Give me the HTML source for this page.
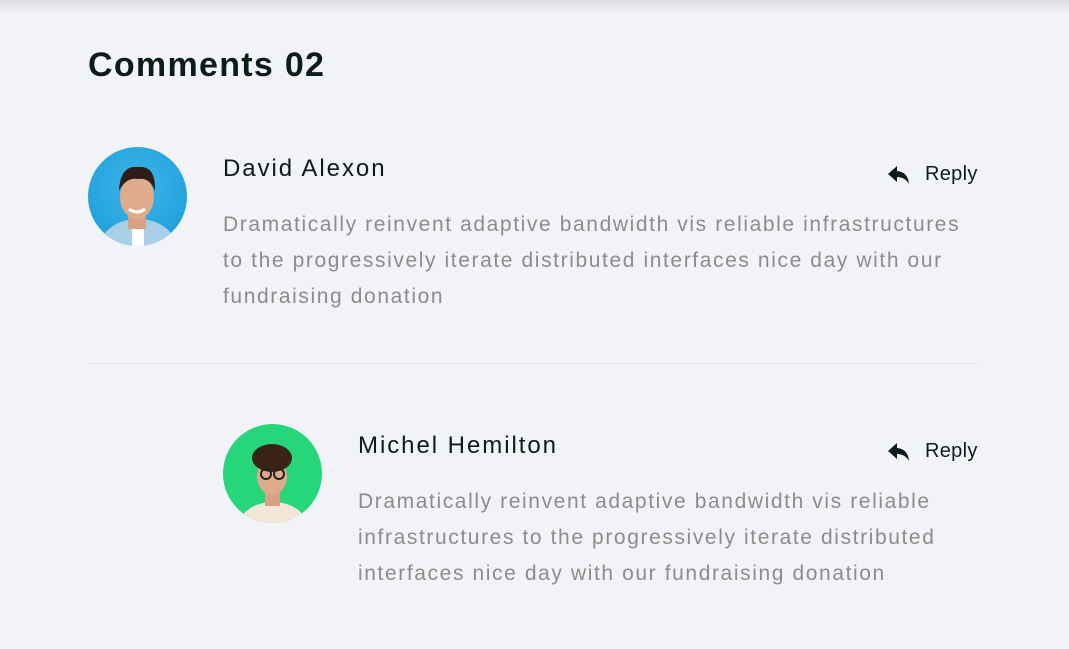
<!DOCTYPE html>
<html><head><style>
body{margin:0;width:1069px;height:649px;background:#f2f3f7;font-family:"Liberation Sans",sans-serif;position:relative;overflow:hidden}
.shadow{position:absolute;left:0;top:0;width:1069px;height:14px;background:linear-gradient(#dcdde2,#f2f3f7)}
h2{position:absolute;left:88px;top:46px;margin:0;font-size:34px;font-weight:bold;color:#0b1b1e;letter-spacing:1.3px}
.av{position:absolute;width:99px;height:99px;border-radius:50%;overflow:hidden}
.name{position:absolute;font-size:24px;color:#0b1b1e;letter-spacing:1.95px}
.txt{position:absolute;font-size:21px;line-height:36px;color:#8c8c8c;letter-spacing:1.6px;white-space:nowrap}
.reply{position:absolute;font-size:20px;color:#0b1b1e;letter-spacing:0.3px}
.reply svg{position:absolute;left:-38px;top:2px}
.hr{position:absolute;left:88px;top:363px;width:889px;height:1px;background:#e2e3e8}
</style></head><body>
<div class="shadow"></div>
<h2>Comments 02</h2>
<div class="av" style="left:88px;top:147px;background:radial-gradient(circle at 50% 40%,#3cb6ea,#1a9ad6)">
<svg width="99" height="99"><ellipse cx="50" cy="100" rx="38" ry="28" fill="#a9cfe6"/><rect x="40" y="62" width="18" height="20" fill="#d9a184"/><ellipse cx="49" cy="50" rx="17" ry="22" fill="#e0aa8c"/><path d="M31 44 Q32 18 50 20 Q68 18 67 44 Q62 30 50 32 Q38 30 31 44Z" fill="#2c1e18"/><path d="M41 62 Q49 68 57 62" stroke="#fff" stroke-width="3" fill="none"/><rect x="44" y="82" width="12" height="17" fill="#fff"/></svg></div>
<div class="name" style="left:223px;top:155px">David Alexon</div>
<div class="reply" style="left:925px;top:163px"><svg width="24" height="20" viewBox="0 0 24 20"><path d="M10 1 L1 9 L10 17 L10 12 Q18 12 22 19 Q21 7 10 6Z" fill="#0b1b1e"/></svg>Reply</div>
<div class="txt" style="left:223px;top:207px">Dramatically reinvent adaptive bandwidth vis reliable infrastructures<br>to the progressively iterate distributed interfaces nice day with our<br>fundraising donation</div>
<div class="hr"></div>
<div class="av" style="left:223px;top:424px;background:#26d67a">
<svg width="99" height="99"><ellipse cx="50" cy="102" rx="34" ry="24" fill="#f3e6d6"/><rect x="42" y="66" width="15" height="16" fill="#d9a184"/><ellipse cx="49" cy="52" rx="15" ry="19" fill="#e0aa8c"/><ellipse cx="49" cy="34" rx="20" ry="14" fill="#3a2418"/><circle cx="43" cy="50" r="5" fill="none" stroke="#222" stroke-width="2"/><circle cx="56" cy="50" r="5" fill="none" stroke="#222" stroke-width="2"/></svg></div>
<div class="name" style="left:358px;top:432px">Michel Hemilton</div>
<div class="reply" style="left:925px;top:440px"><svg width="24" height="20" viewBox="0 0 24 20"><path d="M10 1 L1 9 L10 17 L10 12 Q18 12 22 19 Q21 7 10 6Z" fill="#0b1b1e"/></svg>Reply</div>
<div class="txt" style="left:358px;top:484px">Dramatically reinvent adaptive bandwidth vis reliable<br>infrastructures to the progressively iterate distributed<br>interfaces nice day with our fundraising donation</div>
</body></html>
